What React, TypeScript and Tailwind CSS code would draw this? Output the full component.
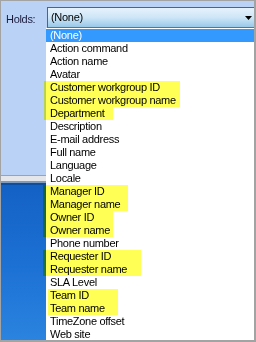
import React from "react";

type Item = {
  label: string;
  mark?: { left: number; width: number };
};

const items: Item[] = [
  { label: "(None)" },
  { label: "Action command" },
  { label: "Action name" },
  { label: "Avatar" },
  { label: "Customer workgroup ID", mark: { left: -2, width: 136 } },
  { label: "Customer workgroup name", mark: { left: -2, width: 136 } },
  { label: "Department", mark: { left: -2, width: 69 } },
  { label: "Description" },
  { label: "E-mail address" },
  { label: "Full name" },
  { label: "Language" },
  { label: "Locale" },
  { label: "Manager ID", mark: { left: -3, width: 85 } },
  { label: "Manager name", mark: { left: -3, width: 85 } },
  { label: "Owner ID", mark: { left: -3, width: 70 } },
  { label: "Owner name", mark: { left: -3, width: 70 } },
  { label: "Phone number" },
  { label: "Requester ID", mark: { left: -3, width: 98 } },
  { label: "Requester name", mark: { left: -3, width: 98 } },
  { label: "SLA Level" },
  { label: "Team ID", mark: { left: 2, width: 70 } },
  { label: "Team name", mark: { left: 2, width: 70 } },
  { label: "TimeZone offset" },
  { label: "Web site" },
];

const font = { fontFamily: '"Liberation Sans", Arial, sans-serif' };

export default function App() {
  return (
    <div
      className="relative grid h-[342px] w-[256px] grid-cols-[45px_1fr] overflow-hidden border-t border-l border-r-2 border-b-2 border-[#a3a3a3] text-[11px] leading-[13px] tracking-[-0.3px] text-black"
      style={font}
    >
      {/* left panel */}
      <div className="flex flex-col">
        <div className="h-[174px] bg-[#bad2f5] pt-[12px] pl-[5px] text-[#1c1c3e]">Holds:</div>
        <div className="h-[1px] bg-[#9da3ab]" />
        <div className="h-[5px] bg-[#e4e6e9]" />
        <div className="h-[2px] bg-[#7f9cbf]" />
        <div className="h-[2px] bg-[#0d4f9e]" />
        <div className="flex-1 bg-gradient-to-b from-[#1461c4] via-[#1c70d4] to-[#2b84df]" />
      </div>

      {/* combo + list */}
      <div className="flex flex-col">
        <div className="bg-[#bad2f5] pt-[6px] pl-[1px]">
          <div className="relative flex h-[21px] items-center border-t border-l border-[#3c6a95] border-b border-b-[#707070] bg-gradient-to-b from-[#e6f2fc] via-[#cde6f7] to-[#98c9e8] pl-[3px]">
            (None)
            <svg
              className="absolute right-[2px] top-[8px]"
              width="7"
              height="4"
              viewBox="0 0 7 4"
            >
              <polygon points="0,0 7,0 3.5,4" fill="#000" />
            </svg>
          </div>
        </div>
        <div className="flex-1 bg-white pt-[1px]">
          {items.map((item, i) => (
            <div
              key={item.label}
              className={
                i === 0
                  ? "relative h-[13px] whitespace-nowrap bg-[#3399ff] pl-[4px] text-white"
                  : "relative h-[13px] whitespace-nowrap pl-[4px]"
              }
            >
              {item.label}
              {item.mark && (
                <span
                  className="absolute top-0 bottom-0 bg-[#ffff55] mix-blend-multiply"
                  style={{ left: item.mark.left, width: item.mark.width }}
                />
              )}
            </div>
          ))}
        </div>
      </div>
    </div>
  );
}
